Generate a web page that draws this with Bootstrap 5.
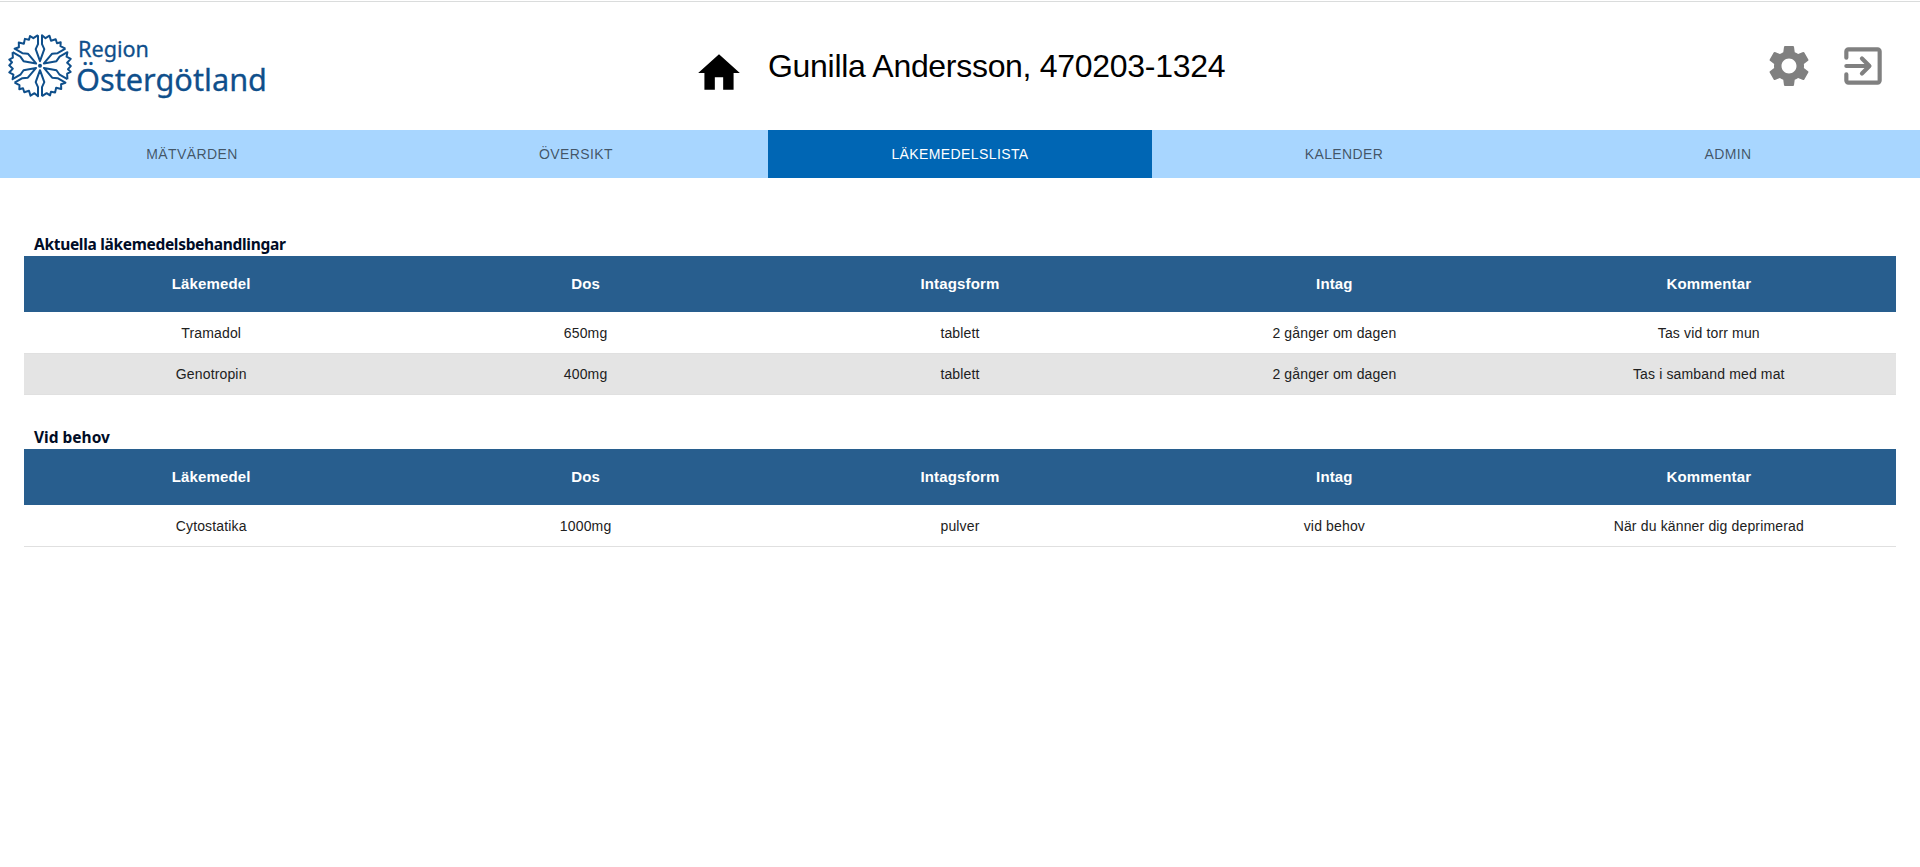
<!DOCTYPE html>
<html lang="sv">
<head>
<meta charset="utf-8">
<title>Läkemedelslista</title>
<meta name="viewport" content="width=device-width, initial-scale=1">
<link href="https://cdn.jsdelivr.net/npm/bootstrap@5.3.0/dist/css/bootstrap.min.css" rel="stylesheet">
<style>
body{font-family:"Liberation Sans",Arial,sans-serif;background:#fff;color:#000}
.topline{height:1px;margin-top:1px;background:#dadcdc}
.site-header{height:128px}
.brand-logo{width:272px;height:80px;margin-top:24px}
.patient{font-size:32px;line-height:48px;letter-spacing:-.3px;margin-top:40px}
.home-link{margin:45.5px 24px 0 422px}
.tools{margin:39px 32px 0 0;gap:24px;color:#808080}
.main-tabs .nav-link{height:48px;border-radius:0;padding:0;font-size:14px;line-height:48px;letter-spacing:.4px;color:rgba(0,0,0,.62);background:#a8d6ff}
.main-tabs .nav-link.active{background:#0066b4;color:#fff}
.list-title{font:700 15.5px/24px "Noto Sans","Open Sans",sans-serif;color:#000c26;margin:0;padding-left:10px;height:24px}
.list-title.current{letter-spacing:-.31px}
.list-title.as-needed{letter-spacing:0}
.med-table{table-layout:fixed;margin:0;font-size:14px;letter-spacing:.15px;line-height:20px;text-align:center;border-collapse:separate;border-spacing:0}
.med-table th{height:56px;padding:0;vertical-align:middle;background:#285e8e;color:#fff;font-size:15px;border:0}
.med-table td{height:41.5px;padding:1px 0 0;vertical-align:middle;border-bottom:1px solid #e0e0e0;color:#212121}
.med-table .shade td{background:#e4e4e4;padding-top:0}
</style>
</head>
<body>
<div class="topline"></div>
<header class="site-header d-flex align-items-start">
  <svg class="brand-logo flex-shrink-0" viewBox="0 26 272 80" fill="none" stroke="#0f4f8b">
    <defs><path id="petal" d="M-2-30.500V-21.500L-4.300-16.500L0-4.500L4.300-16.500L2-21.500V-30.500L5.500-27.500L9.500-30L11-25L15.700-26.500L17-22.500L20.700-23.500L20.500-19.500L25.400-17"/></defs>
    <g transform="translate(40 65.700)" stroke-width="2" stroke-linejoin="round"><use href="#petal"/><use href="#petal" transform="rotate(60)"/><use href="#petal" transform="rotate(120)"/><use href="#petal" transform="rotate(180)"/><use href="#petal" transform="rotate(240)"/><use href="#petal" transform="rotate(300)"/><circle r="2" fill="#0f4f8b" stroke="none"/></g>
    <g fill="#0f4f8b" stroke="#0f4f8b" stroke-width=".3" font-family="Noto Sans, sans-serif"><text x="78" y="57" font-size="22" textLength="71" lengthAdjust="spacingAndGlyphs">Region</text><text x="76" y="90.500" font-size="31.500" textLength="191" lengthAdjust="spacingAndGlyphs">Östergötland</text></g>
  </svg>
  <a class="home-link text-black lh-1" href="#" aria-label="Hem"><svg width="50" height="50" viewBox="0 0 24 24" fill="currentColor"><path d="M10 20v-6h4v6h5v-8h3L12 3 2 12h3v8z"/></svg></a>
  <div class="patient text-nowrap">Gunilla Andersson, 470203-1324</div>
  <div class="tools d-flex ms-auto">
    <svg width="50" height="50" viewBox="0 0 24 24" fill="currentColor"><path d="M19.140 12.940c.04-.3.060-.61.060-.94 0-.32-.02-.64-.07-.94l2.030-1.580c.18-.14.230-.41.120-.61l-1.920-3.320c-.12-.22-.37-.29-.59-.22l-2.390.96c-.5-.38-1.030-.7-1.620-.94l-.36-2.540c-.04-.24-.24-.41-.48-.41h-3.840c-.24 0-.43.17-.47.41l-.36 2.540c-.59.24-1.130.57-1.620.94l-2.390-.96c-.22-.08-.47 0-.59.22L2.740 8.870c-.12.21-.08.47.12.61l2.030 1.580c-.05.3-.09.63-.09.94s.02.64.070.94l-2.030 1.580c-.18.14-.23.41-.12.61l1.920 3.320c.12.22.37.29.59.22l2.390-.96c.5.38 1.030.7 1.620.94l.36 2.540c.05.24.24.41.48.41h3.840c.24 0 .44-.17.47-.41l.36-2.540c.59-.24 1.130-.56 1.620-.94l2.390.96c.22.080.47 0 .59-.22l1.920-3.320c.12-.22.070-.47-.12-.61l-2.010-1.580zM12 15.600c-1.980 0-3.600-1.620-3.600-3.600s1.620-3.600 3.600-3.600 3.600 1.620 3.600 3.600-1.620 3.600-3.600 3.600z"/></svg>
    <svg width="50" height="50" viewBox="0 0 24 24" fill="none" stroke="currentColor" stroke-width="2" stroke-linecap="round" stroke-linejoin="round"><path d="M4 8V5a1 1 0 0 1 1-1h14a1 1 0 0 1 1 1v14a1 1 0 0 1-1 1H5a1 1 0 0 1-1-1v-3M4 12h11M11.500 8.400L15.100 12l-3.600 3.600"/></svg>
  </div>
</header>
<nav class="main-tabs nav nav-pills nav-justified">
  <a class="nav-link" href="#">MÄTVÄRDEN</a><a class="nav-link" href="#">ÖVERSIKT</a><a class="nav-link active" href="#">LÄKEMEDELSLISTA</a><a class="nav-link" href="#">KALENDER</a><a class="nav-link" href="#">ADMIN</a>
</nav>
<main class="px-4">
  <section style="padding-top:54px">
    <h2 class="list-title current">Aktuella läkemedelsbehandlingar</h2>
    <table class="table med-table">
      <thead><tr><th>Läkemedel</th><th>Dos</th><th>Intagsform</th><th>Intag</th><th>Kommentar</th></tr></thead>
      <tbody><tr><td>Tramadol</td><td>650mg</td><td>tablett</td><td>2 gånger om dagen</td><td>Tas vid torr mun</td></tr>
      <tr class="shade"><td>Genotropin</td><td>400mg</td><td>tablett</td><td>2 gånger om dagen</td><td>Tas i samband med mat</td></tr></tbody>
    </table>
  </section>
  <section style="padding-top:30px">
    <h2 class="list-title as-needed">Vid behov</h2>
    <table class="table med-table">
      <thead><tr><th>Läkemedel</th><th>Dos</th><th>Intagsform</th><th>Intag</th><th>Kommentar</th></tr></thead>
      <tbody><tr><td>Cytostatika</td><td>1000mg</td><td>pulver</td><td>vid behov</td><td>När du känner dig deprimerad</td></tr></tbody>
    </table>
  </section>
</main>
<script src="https://cdn.jsdelivr.net/npm/bootstrap@5.3.0/dist/js/bootstrap.bundle.min.js"></script>
</body>
</html>
